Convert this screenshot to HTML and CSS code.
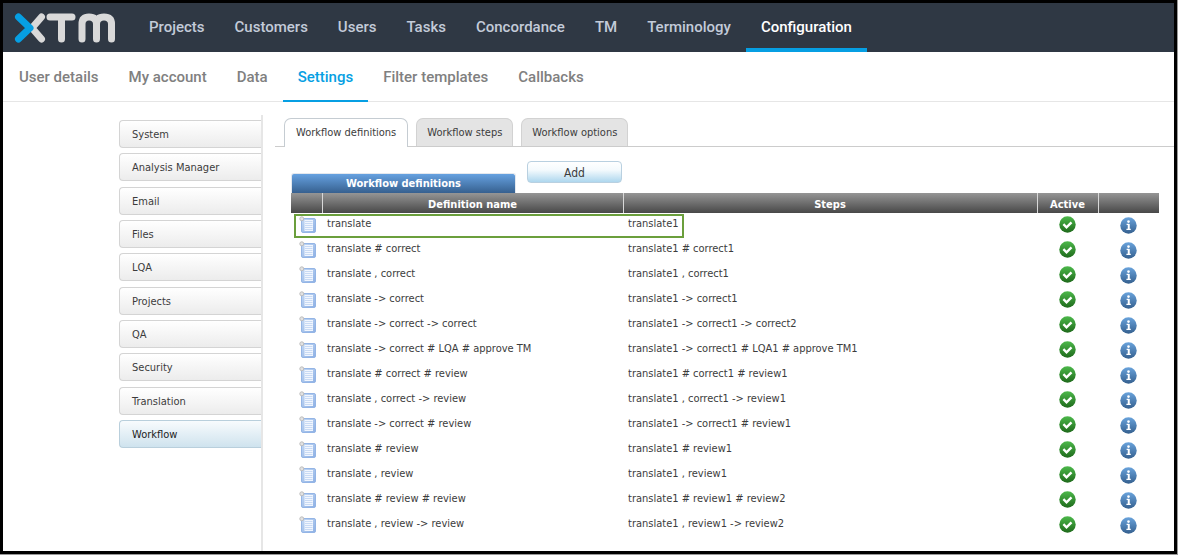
FILE: index.html
```
<!DOCTYPE html>
<html lang="en">
<head>
   <meta charset="UTF-8">
   <meta name="viewport" content="width=device-width, initial-scale=1.0">
   <title>XTM - Workflow definitions</title>
   <link rel="stylesheet" href="styles.css">
</head>
<body>
   <!-- Shared icons -->
   <svg class="icon-defs" width="0" height="0" aria-hidden="true">
       <defs>
           <linearGradient id="greenFill" x1="0" y1="0" x2="0" y2="1">
               <stop offset="0" stop-color="#4cb84a"/>
               <stop offset="1" stop-color="#1f6a1c"/>
           </linearGradient>
           <linearGradient id="blueFill" x1="0" y1="0" x2="0" y2="1">
               <stop offset="0" stop-color="#69a3dc"/>
               <stop offset="1" stop-color="#35608f"/>
           </linearGradient>
           <linearGradient id="pageFill" x1="0" y1="0" x2="1" y2="1">
               <stop offset="0" stop-color="#c3d9f5"/>
               <stop offset="1" stop-color="#8db0e4"/>
           </linearGradient>
           <symbol id="icon-menu" viewBox="0 0 18 18">
               <rect x="2.5" y="2.5" width="14" height="14" rx="1.5" fill="url(#pageFill)" stroke="#94b5e6"/>
               <rect x="5.5" y="4" width="8.5" height="11" fill="#f1f6fe"/>
               <path d="M6 5.5h7.5M6 7.5h7.5M6 9.5h7.5M6 11.5h7.5M6 13.5h7.5" stroke="#c8daf4"/>
               <circle cx="2.8" cy="2.8" r="2" fill="#e2e2e2" stroke="#bdbdbd"/>
           </symbol>
           <symbol id="icon-check" viewBox="0 0 17 17">
               <circle cx="8.5" cy="8.5" r="8.2" fill="url(#greenFill)"/>
               <path d="M4.4 8.2l3.1 3.1 5-5" fill="none" stroke="#fff" stroke-width="2.4"/>
           </symbol>
           <symbol id="icon-info" viewBox="0 0 17 17">
               <circle cx="8.5" cy="8.5" r="8.2" fill="url(#blueFill)"/>
               <circle cx="8.5" cy="4.6" r="1.3" fill="#fff"/>
               <path d="M6.6 7.4h2.1v5M6.4 12.4h4.4" fill="none" stroke="#fff" stroke-width="1.2"/>
               <path d="M8.7 7v5.6" stroke="#fff" stroke-width="1.9"/>
           </symbol>
       </defs>
   </svg>

   <!-- Header and main navigation -->
   <header class="top-bar">
       <svg class="logo" viewBox="0 0 102 32" role="img" aria-label="XTM">
           <g fill="none" stroke="#d9d9d9" stroke-width="7" stroke-linecap="round" stroke-linejoin="round">
               <path d="M27.500 5L18 16L27.500 27"/>
               <path d="M4.500 5L16 16L4.500 27" stroke="#069fe3"/>
               <path d="M36 5H58M47.500 5V27"/>
               <path d="M68 27V12Q68 5 75 5Q82.500 5 82.500 12V27M82.500 12Q82.500 5 90 5Q97.500 5 97.500 12V27"/>
           </g>
       </svg>
       <nav class="main-nav">
           <a href="#">Projects</a>
           <a href="#">Customers</a>
           <a href="#">Users</a>
           <a href="#">Tasks</a>
           <a href="#">Concordance</a>
           <a href="#">TM</a>
           <a href="#">Terminology</a>
           <a href="#" class="active">Configuration</a>
       </nav>
   </header>

   <!-- Configuration sub navigation -->
   <nav class="sub-nav">
       <a href="#">User details</a>
       <a href="#">My account</a>
       <a href="#">Data</a>
       <a href="#" class="active">Settings</a>
       <a href="#">Filter templates</a>
       <a href="#">Callbacks</a>
   </nav>

   <div class="page">
       <!-- Settings menu on the left -->
       <aside class="sidebar">
           <nav class="side-menu">
               <a href="#">System</a>
               <a href="#">Analysis Manager</a>
               <a href="#">Email</a>
               <a href="#">Files</a>
               <a href="#">LQA</a>
               <a href="#">Projects</a>
               <a href="#">QA</a>
               <a href="#">Security</a>
               <a href="#">Translation</a>
               <a href="#" class="active">Workflow</a>
           </nav>
       </aside>

       <main class="content">
           <!-- Tabs -->
           <div class="tabs" role="tablist">
               <button class="tab active" role="tab" aria-selected="true">Workflow definitions</button>
               <button class="tab" role="tab" aria-selected="false">Workflow steps</button>
               <button class="tab" role="tab" aria-selected="false">Workflow options</button>
           </div>

           <div class="panel">
               <div class="panel-head">
                   <h2 class="panel-title">Workflow definitions</h2>
                   <button class="add-button">Add</button>
               </div>
               <div class="table-wrap">
                   <table class="definitions">
                       <colgroup>
                           <col class="col-menu">
                           <col class="col-name">
                           <col class="col-steps">
                           <col class="col-icon">
                           <col class="col-icon">
                       </colgroup>
                       <thead>
                           <tr><th></th><th>Definition name</th><th>Steps</th><th>Active</th><th></th></tr>
                       </thead>
                       <tbody id="definitionRows"></tbody>
                   </table>
                   <div class="highlight"></div>
               </div>
           </div>
       </main>
   </div>
   <script src="script.js"></script>
</body>
</html>
```

FILE: styles.css
```
* {
    box-sizing: border-box;
}

html {
    background-color: #999;
}

/* black frame around the whole page */
body {
    margin: 0 1px 1px 0;
    min-height: calc(100vh - 1px);
    display: flex;
    flex-direction: column;
    border: 3px solid #000;
    background-color: #fff;
    font-family: "DejaVu Sans Condensed", Tahoma, "DejaVu Sans", sans-serif;
    font-size: 11px;
    color: #3c3c3c;
}

a {
    text-decoration: none;
    color: inherit;
}

.icon-defs {
    position: absolute;
}

/* header */
.top-bar {
    display: flex;
    align-items: center;
    height: 49px;
    padding-left: 11px;
    background-color: #2f3844;
}

.logo {
    width: 102px;
    height: 32px;
    margin-right: 18px;
}

.main-nav,
.sub-nav {
    display: flex;
    font-family: Roboto, sans-serif;
    font-size: 15px;
    font-weight: 500;
}

.main-nav a {
    height: 49px;
    padding: 0 15px;
    line-height: 48px;
    color: #c3cbd9;
}

.main-nav .active {
    color: #fff;
    border-bottom: 4px solid #069fe3;
}

/* sub navigation */
.sub-nav {
    height: 50px;
    padding-left: 1px;
    border-bottom: 1px solid #e6e6e6;
    color: #808080;
}

.sub-nav a {
    height: 50px;
    padding: 0 15px;
    line-height: 50px;
}

.sub-nav .active {
    color: #069fe3;
    border-bottom: 2px solid #069fe3;
}

/* page body */
.page {
    flex: 1;
    display: flex;
    padding-top: 13px;
}

.sidebar {
    flex: none;
    width: 260px;
    padding: 5px 0 0 116px;
    border-right: 2px solid #e6e6e6;
}

.side-menu {
    display: flex;
    flex-direction: column;
    justify-content: space-between;
    min-height: 328px;
}

.side-menu a {
    height: 28px;
    padding-left: 12px;
    line-height: 28px;
    border: 1px solid #d4d4d4;
    border-right: none;
    border-radius: 4px 0 0 4px;
    background: linear-gradient(#fff, #ececec);
}

.side-menu .active {
    color: #222;
    border-color: #b9cfdc;
    background: linear-gradient(#f8fbfd, #cfe3ee);
}

.content {
    flex: 1;
    min-width: 0;
    padding: 3px 0 0 12px;
}

/* tabs */
.tabs {
    display: flex;
    gap: 8px;
    padding-left: 9px;
    border-bottom: 1px solid #ccc;
}

.tab {
    height: 28px;
    padding: 0 10px;
    font: inherit;
    color: inherit;
    border: 1px solid #d2d2d2;
    border-bottom: none;
    border-radius: 7px 7px 0 0;
    background-color: #e4e4e4;
}

.tab.active {
    margin-bottom: -1px;
    padding: 0 11px 1px;
    height: 29px;
    border-color: #c5ccd2;
    background-color: #fff;
}

/* definitions panel */
.panel {
    padding: 14px 15px 0 16px;
}

.panel-head {
    display: flex;
    gap: 11px;
    height: 32px;
}

.panel-title {
    align-self: flex-end;
    width: 225px;
    height: 20px;
    margin: 0;
    font-size: 11px;
    line-height: 19px;
    text-align: center;
    color: #fff;
    border: 1px solid #e4e8ee;
    border-bottom: none;
    border-radius: 3px 3px 0 0;
    background: linear-gradient(#66a1e0, #36608f);
}

.add-button {
    width: 95px;
    height: 22px;
    padding: 1px 0 0;
    font: inherit;
    font-size: 12px;
    color: inherit;
    border: 1px solid #b9d0e0;
    border-radius: 4px;
    background: linear-gradient(#fff, #f4fafd 40%, #aed7ee);
}

.table-wrap {
    position: relative;
}

.definitions {
    width: 100%;
    table-layout: fixed;
    border-collapse: collapse;
}

.col-menu {
    width: 31px;
}

.col-name {
    width: 301px;
}

.col-icon {
    width: 61px;
}

.definitions thead tr {
    background: linear-gradient(#959595, #484848);
}

.definitions th {
    height: 20px;
    padding: 2px 0 0;
    color: #fff;
    border-left: 1px solid #d8d8d8;
}

.definitions th:first-child {
    border-left: none;
}

.definitions td {
    height: 25px;
    padding: 4px 0 0 5px;
    line-height: 14px;
    vertical-align: top;
}

.definitions .icon-cell {
    padding: 3px 0 0;
    text-align: center;
}

.icon-cell svg {
    display: block;
    margin: 0 auto;
}

.definitions .menu-cell {
    padding: 3px 0 0 2px;
}

.definitions .info-cell {
    padding-top: 4px;
}

/* green frame over the first definition */
.highlight {
    position: absolute;
    top: 21px;
    left: 3px;
    width: 390px;
    height: 24px;
    border: 2px solid #6b9f3c;
}
```

FILE: script.js
```
// Name and steps of each workflow definition
const definitions = [
    ['translate', 'translate1'],
    ['translate # correct', 'translate1 # correct1'],
    ['translate , correct', 'translate1 , correct1'],
    ['translate -> correct', 'translate1 -> correct1'],
    ['translate -> correct -> correct', 'translate1 -> correct1 -> correct2'],
    ['translate -> correct # LQA # approve TM', 'translate1 -> correct1 # LQA1 # approve TM1'],
    ['translate # correct # review', 'translate1 # correct1 # review1'],
    ['translate , correct -> review', 'translate1 , correct1 -> review1'],
    ['translate -> correct # review', 'translate1 -> correct1 # review1'],
    ['translate # review', 'translate1 # review1'],
    ['translate , review', 'translate1 , review1'],
    ['translate # review # review', 'translate1 # review1 # review2'],
    ['translate , review -> review', 'translate1 , review1 -> review2']
];

// Build an svg that points to one of the shared icons
function icon(name, size) {
    return `<svg width="${size}" height="${size}" aria-hidden="true"><use href="#icon-${name}"/></svg>`;
}

const rows = document.getElementById('definitionRows');

definitions.forEach(([name, steps]) => {
    const row = rows.insertRow();
    row.innerHTML = `<td class="icon-cell menu-cell">${icon('menu', 18)}</td><td></td><td></td>
        <td class="icon-cell">${icon('check', 17)}</td>
        <td class="icon-cell info-cell">${icon('info', 17)}</td>`;
    row.cells[1].textContent = name;
    row.cells[2].textContent = steps;
});
```
